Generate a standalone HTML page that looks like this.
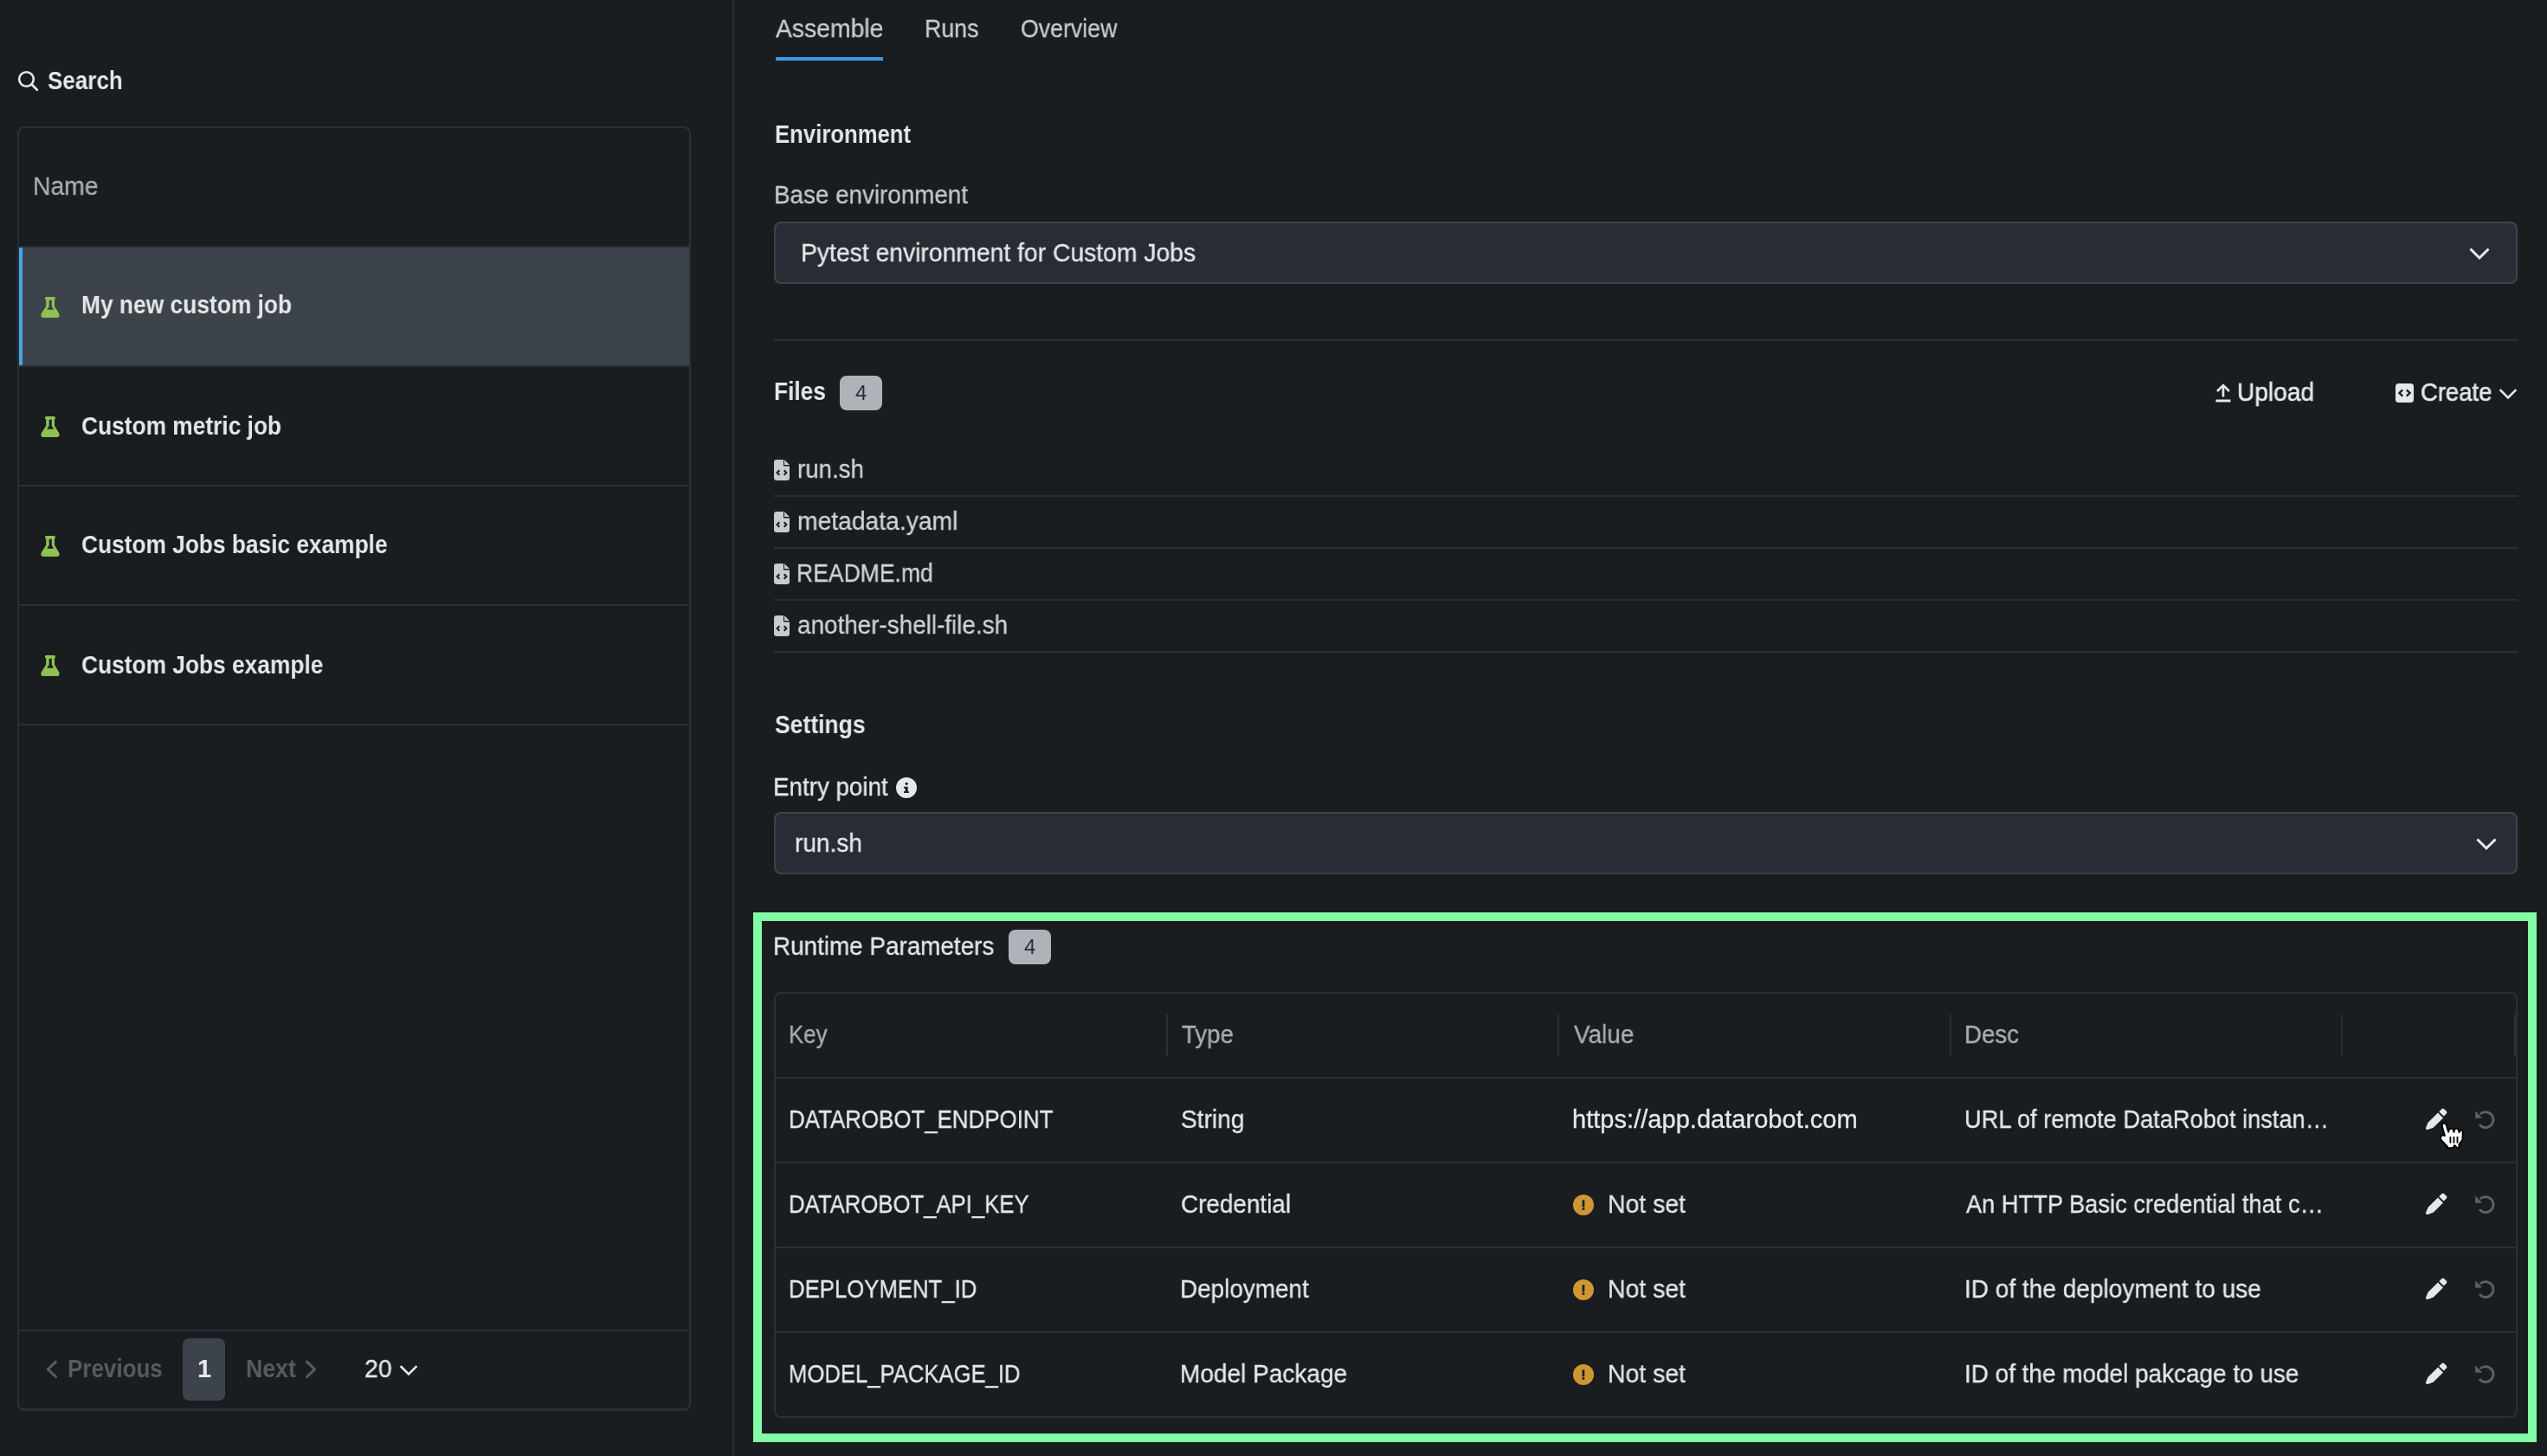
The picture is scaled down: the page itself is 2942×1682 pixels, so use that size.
<!DOCTYPE html>
<html><head><meta charset="utf-8"><style>
html,body{margin:0;padding:0;width:2942px;height:1682px;overflow:hidden;background:#191d20;}
body{position:relative;font-family:"Liberation Sans", sans-serif;}
.t{position:absolute;white-space:nowrap;font-family:"Liberation Sans", sans-serif;transform-origin:0 0;will-change:transform;}
svg{position:absolute;left:0;top:0;}
</style></head><body>
<div style="position:absolute;left:846px;top:0px;width:2px;height:1682px;background:#2b2f36;"></div><div style="position:absolute;left:20px;top:146px;width:774px;height:1479px;border:2px solid #2b2f36;border-bottom-width:3px;border-radius:8px"></div><div style="position:absolute;left:22px;top:284px;width:774px;height:2px;background:#2b2f36;"></div><div style="position:absolute;left:22px;top:286px;width:774px;height:136px;background:#3d434b;"></div><div style="position:absolute;left:22px;top:286px;width:4px;height:136px;background:#46a3e8;"></div><div style="position:absolute;left:22px;top:422px;width:774px;height:2px;background:#2b2f36;"></div><div style="position:absolute;left:22px;top:560px;width:774px;height:2px;background:#2b2f36;"></div><div style="position:absolute;left:22px;top:698px;width:774px;height:2px;background:#2b2f36;"></div><div style="position:absolute;left:22px;top:836px;width:774px;height:2px;background:#2b2f36;"></div><div style="position:absolute;left:22px;top:1536px;width:774px;height:2px;background:#2b2f36;"></div><div style="position:absolute;left:211px;top:1546px;width:49px;height:72px;background:#3d434b;border-radius:7px"></div><div style="position:absolute;left:896px;top:66px;width:124px;height:4px;background:#3d9be6;"></div><div style="position:absolute;left:894px;top:256px;width:2010px;height:68px;background:#282d35;border:2px solid #3e434b;border-radius:8px"></div><div style="position:absolute;left:894px;top:938px;width:2010px;height:68px;background:#282d35;border:2px solid #3e434b;border-radius:8px"></div><div style="position:absolute;left:894px;top:392px;width:2014px;height:2px;background:#2b2f36;"></div><div style="position:absolute;left:970px;top:434px;width:49px;height:40px;background:#aeb3ba;border-radius:8px"></div><div style="position:absolute;left:1165px;top:1074px;width:49px;height:40px;background:#aeb3ba;border-radius:8px"></div><div style="position:absolute;left:894px;top:572px;width:2014px;height:2px;background:#2b2f36;"></div><div style="position:absolute;left:894px;top:632px;width:2014px;height:2px;background:#2b2f36;"></div><div style="position:absolute;left:894px;top:692px;width:2014px;height:2px;background:#2b2f36;"></div><div style="position:absolute;left:894px;top:752px;width:2014px;height:2px;background:#2b2f36;"></div><div style="position:absolute;left:870px;top:1054px;width:2040px;height:592px;border:10px solid #82fba5"></div><div style="position:absolute;left:894px;top:1146px;width:2010px;height:488px;border:2px solid #2b2f36;border-radius:8px"></div><div style="position:absolute;left:896px;top:1244px;width:2010px;height:2px;background:#2b2f36;"></div><div style="position:absolute;left:896px;top:1342px;width:2010px;height:2px;background:#2b2f36;"></div><div style="position:absolute;left:896px;top:1440px;width:2010px;height:2px;background:#2b2f36;"></div><div style="position:absolute;left:896px;top:1538px;width:2010px;height:2px;background:#2b2f36;"></div><div style="position:absolute;left:1347px;top:1172px;width:2px;height:48px;background:#2b2f36;"></div><div style="position:absolute;left:1799px;top:1172px;width:2px;height:48px;background:#2b2f36;"></div><div style="position:absolute;left:2252px;top:1172px;width:2px;height:48px;background:#2b2f36;"></div><div style="position:absolute;left:2704px;top:1172px;width:2px;height:48px;background:#2b2f36;"></div><div style="position:absolute;left:2904px;top:1172px;width:2px;height:48px;background:#2b2f36;"></div>
<svg width="2942" height="1682" viewBox="0 0 2942 1682"><circle cx="30.5" cy="91.5" r="8.3" fill="none" stroke="#e6e7e8" stroke-width="2.6"/><line x1="36.8" y1="97.8" x2="42.8" y2="103.8" stroke="#e6e7e8" stroke-width="2.8" stroke-linecap="round"/><g transform="translate(47,343)" fill="#8fc052"><rect x="4.9" y="0" width="12.1" height="3.4" rx="1.7"/><path fill-rule="evenodd" d="M6.2,3 L16,3 L16,10.8 L21.3,19.5 Q22.6,24 18.5,24 L3.5,24 Q-0.6,24 0.7,19.5 L6.2,10.8 Z M9.7,3.4 L12.8,3.4 L12.8,11 L15,14.7 L7.2,14.7 L9.7,11 Z"/></g><g transform="translate(47,481)" fill="#8fc052"><rect x="4.9" y="0" width="12.1" height="3.4" rx="1.7"/><path fill-rule="evenodd" d="M6.2,3 L16,3 L16,10.8 L21.3,19.5 Q22.6,24 18.5,24 L3.5,24 Q-0.6,24 0.7,19.5 L6.2,10.8 Z M9.7,3.4 L12.8,3.4 L12.8,11 L15,14.7 L7.2,14.7 L9.7,11 Z"/></g><g transform="translate(47,619)" fill="#8fc052"><rect x="4.9" y="0" width="12.1" height="3.4" rx="1.7"/><path fill-rule="evenodd" d="M6.2,3 L16,3 L16,10.8 L21.3,19.5 Q22.6,24 18.5,24 L3.5,24 Q-0.6,24 0.7,19.5 L6.2,10.8 Z M9.7,3.4 L12.8,3.4 L12.8,11 L15,14.7 L7.2,14.7 L9.7,11 Z"/></g><g transform="translate(47,757)" fill="#8fc052"><rect x="4.9" y="0" width="12.1" height="3.4" rx="1.7"/><path fill-rule="evenodd" d="M6.2,3 L16,3 L16,10.8 L21.3,19.5 Q22.6,24 18.5,24 L3.5,24 Q-0.6,24 0.7,19.5 L6.2,10.8 Z M9.7,3.4 L12.8,3.4 L12.8,11 L15,14.7 L7.2,14.7 L9.7,11 Z"/></g><polyline points="2854.5,288.5 2864.0,298 2873.5,288.5" fill="none" stroke="#e6e7e8" stroke-width="3" stroke-linecap="square"/><polyline points="2862.5,970.5 2872.0,980 2881.5,970.5" fill="none" stroke="#e6e7e8" stroke-width="3" stroke-linecap="square"/><polyline points="2888.5,451 2897.0,459.5 2905.5,451" fill="none" stroke="#e6e7e8" stroke-width="2.6" stroke-linecap="square"/><polyline points="463.5,1579 472.0,1587.5 480.5,1579" fill="none" stroke="#e6e7e8" stroke-width="2.6" stroke-linecap="square"/><polyline points="64.5,1573.2 55.3,1581.8 64.5,1590.4" fill="none" stroke="#575c61" stroke-width="3" stroke-linecap="round" stroke-linejoin="round"/><polyline points="354.5,1573.2 363.7,1581.8 354.5,1590.4" fill="none" stroke="#575c61" stroke-width="3" stroke-linecap="round" stroke-linejoin="round"/><g fill="none" stroke="#e6e7e8" stroke-width="2.6"><line x1="2568" y1="445.5" x2="2568" y2="458.5"/><polyline points="2561,452 2568,445 2575,452"/><line x1="2559.5" y1="463" x2="2576.5" y2="463" stroke-width="3"/></g><rect x="2767" y="443" width="21" height="22" rx="3.5" fill="#e6e7e8"/><g fill="none" stroke="#1c2025" stroke-width="2.4"><polyline points="2775.3,450.3 2771.5,454 2775.3,457.7"/><polyline points="2779.8,450.3 2783.6,454 2779.8,457.7"/></g><g transform="translate(894,531)"><path fill="#c8cbcc" d="M0,3 Q0,0 3,0 L11,0 L11,7.5 L18,7.5 L18,21 Q18,24 15,24 L3,24 Q0,24 0,21 Z M12,0 L18,6 L12,6 Z"/><g fill="none" stroke="#191d21" stroke-width="2"><polyline points="6.3,12.2 3.6,15 6.3,17.8"/><polyline points="11.7,12.2 14.4,15 11.7,17.8"/></g></g><g transform="translate(894,591)"><path fill="#c8cbcc" d="M0,3 Q0,0 3,0 L11,0 L11,7.5 L18,7.5 L18,21 Q18,24 15,24 L3,24 Q0,24 0,21 Z M12,0 L18,6 L12,6 Z"/><g fill="none" stroke="#191d21" stroke-width="2"><polyline points="6.3,12.2 3.6,15 6.3,17.8"/><polyline points="11.7,12.2 14.4,15 11.7,17.8"/></g></g><g transform="translate(894,651)"><path fill="#c8cbcc" d="M0,3 Q0,0 3,0 L11,0 L11,7.5 L18,7.5 L18,21 Q18,24 15,24 L3,24 Q0,24 0,21 Z M12,0 L18,6 L12,6 Z"/><g fill="none" stroke="#191d21" stroke-width="2"><polyline points="6.3,12.2 3.6,15 6.3,17.8"/><polyline points="11.7,12.2 14.4,15 11.7,17.8"/></g></g><g transform="translate(894,711)"><path fill="#c8cbcc" d="M0,3 Q0,0 3,0 L11,0 L11,7.5 L18,7.5 L18,21 Q18,24 15,24 L3,24 Q0,24 0,21 Z M12,0 L18,6 L12,6 Z"/><g fill="none" stroke="#191d21" stroke-width="2"><polyline points="6.3,12.2 3.6,15 6.3,17.8"/><polyline points="11.7,12.2 14.4,15 11.7,17.8"/></g></g><circle cx="1047" cy="910" r="12" fill="#e6e7e8"/><circle cx="1047.2" cy="905.3" r="1.6" fill="#191d21"/><path fill="#191d21" d="M1044,908.8 L1048.6,908.8 L1048.6,914.2 L1049.9,914.2 L1049.9,916 L1044,916 L1044,914.2 L1045.5,914.2 L1045.5,910.4 L1044,910.4 Z"/><circle cx="1829" cy="1392" r="12" fill="#cf9733"/><rect x="1827.6" y="1386.3" width="2.7" height="8" fill="#191d21"/><rect x="1827.6" y="1395.2" width="2.7" height="2.6" fill="#191d21"/><circle cx="1829" cy="1490" r="12" fill="#cf9733"/><rect x="1827.6" y="1484.3" width="2.7" height="8" fill="#191d21"/><rect x="1827.6" y="1493.2" width="2.7" height="2.6" fill="#191d21"/><circle cx="1829" cy="1588" r="12" fill="#cf9733"/><rect x="1827.6" y="1582.3" width="2.7" height="8" fill="#191d21"/><rect x="1827.6" y="1591.2" width="2.7" height="2.6" fill="#191d21"/><g transform="translate(0,0)" fill="#e6e7e8"><path d="M2802.3,1304.6 Q2801.6,1303.9 2802.2,1302.6 L2804.6,1296.8 L2816,1285.5 L2822,1291.4 L2810.6,1302.8 L2804.3,1305 Q2803,1305.3 2802.3,1304.6 Z"/><path d="M2817.3,1284.2 L2820.3,1281.2 Q2821.8,1279.9 2823.3,1281.2 L2825.9,1283.8 Q2827.1,1285.3 2825.8,1286.6 L2822.8,1289.6 Z"/></g><g transform="translate(0,0)"><path d="M2864.8,1287 A9,9 0 1 1 2864,1299.2" fill="none" stroke="#5d6266" stroke-width="2.8"/><path d="M2859.2,1283.6 L2859.2,1291.8 L2867.2,1291.6 Z" fill="#5d6266"/></g><g transform="translate(0,98)" fill="#e6e7e8"><path d="M2802.3,1304.6 Q2801.6,1303.9 2802.2,1302.6 L2804.6,1296.8 L2816,1285.5 L2822,1291.4 L2810.6,1302.8 L2804.3,1305 Q2803,1305.3 2802.3,1304.6 Z"/><path d="M2817.3,1284.2 L2820.3,1281.2 Q2821.8,1279.9 2823.3,1281.2 L2825.9,1283.8 Q2827.1,1285.3 2825.8,1286.6 L2822.8,1289.6 Z"/></g><g transform="translate(0,98)"><path d="M2864.8,1287 A9,9 0 1 1 2864,1299.2" fill="none" stroke="#5d6266" stroke-width="2.8"/><path d="M2859.2,1283.6 L2859.2,1291.8 L2867.2,1291.6 Z" fill="#5d6266"/></g><g transform="translate(0,196)" fill="#e6e7e8"><path d="M2802.3,1304.6 Q2801.6,1303.9 2802.2,1302.6 L2804.6,1296.8 L2816,1285.5 L2822,1291.4 L2810.6,1302.8 L2804.3,1305 Q2803,1305.3 2802.3,1304.6 Z"/><path d="M2817.3,1284.2 L2820.3,1281.2 Q2821.8,1279.9 2823.3,1281.2 L2825.9,1283.8 Q2827.1,1285.3 2825.8,1286.6 L2822.8,1289.6 Z"/></g><g transform="translate(0,196)"><path d="M2864.8,1287 A9,9 0 1 1 2864,1299.2" fill="none" stroke="#5d6266" stroke-width="2.8"/><path d="M2859.2,1283.6 L2859.2,1291.8 L2867.2,1291.6 Z" fill="#5d6266"/></g><g transform="translate(0,294)" fill="#e6e7e8"><path d="M2802.3,1304.6 Q2801.6,1303.9 2802.2,1302.6 L2804.6,1296.8 L2816,1285.5 L2822,1291.4 L2810.6,1302.8 L2804.3,1305 Q2803,1305.3 2802.3,1304.6 Z"/><path d="M2817.3,1284.2 L2820.3,1281.2 Q2821.8,1279.9 2823.3,1281.2 L2825.9,1283.8 Q2827.1,1285.3 2825.8,1286.6 L2822.8,1289.6 Z"/></g><g transform="translate(0,294)"><path d="M2864.8,1287 A9,9 0 1 1 2864,1299.2" fill="none" stroke="#5d6266" stroke-width="2.8"/><path d="M2859.2,1283.6 L2859.2,1291.8 L2867.2,1291.6 Z" fill="#5d6266"/></g><path d="M2823,1297.6 Q2825.3,1297.4 2826,1300.2 L2828.2,1307.6 L2828.6,1305.4 Q2831.2,1301.8 2833.8,1305.2 L2834.5,1307.8 L2834.9,1305.2 Q2837.3,1301.8 2839.7,1305 L2840.5,1308 Q2843.3,1303.8 2844.8,1307 L2844.5,1316.7 L2840.4,1322.4 L2840.4,1326.2 L2838.1,1326.2 L2835.4,1323.2 L2833.2,1326.2 L2826.8,1326.2 L2826.8,1324.4 L2819.4,1316.8 Q2818.2,1313.3 2820.5,1311.6 Q2822.2,1310.8 2823.9,1312 L2820.6,1300.4 Q2820.8,1297.8 2823,1297.6 Z" fill="#fafafa" stroke="#000" stroke-width="2" stroke-linejoin="round"/><g stroke="#000" stroke-width="1.8"><line x1="2830.4" y1="1313" x2="2830.4" y2="1320.6"/><line x1="2834.5" y1="1313" x2="2834.5" y2="1320.6"/><line x1="2838.5" y1="1313" x2="2838.5" y2="1320.6"/></g></svg>
<div class="t" style="left:54.90px;top:78.60px;font-size:29px;line-height:29px;font-weight:700;color:#e6e7e8;letter-spacing:0.000px;transform:scaleX(0.8967);">Search</div><div class="t" style="left:37.55px;top:200.50px;font-size:29px;line-height:29px;font-weight:400;color:#a9aeb6;letter-spacing:0.000px;transform:scaleX(0.9767);-webkit-text-stroke:0.3px #a9aeb6;">Name</div><div class="t" style="left:94.09px;top:338.30px;font-size:29px;line-height:29px;font-weight:700;color:#e6e7e8;letter-spacing:0.000px;transform:scaleX(0.9087);">My new custom job</div><div class="t" style="left:94.09px;top:477.50px;font-size:29px;line-height:29px;font-weight:700;color:#e6e7e8;letter-spacing:0.000px;transform:scaleX(0.9076);">Custom metric job</div><div class="t" style="left:94.09px;top:615.00px;font-size:29px;line-height:29px;font-weight:700;color:#e6e7e8;letter-spacing:0.000px;transform:scaleX(0.9064);">Custom Jobs basic example</div><div class="t" style="left:94.09px;top:753.50px;font-size:29px;line-height:29px;font-weight:700;color:#e6e7e8;letter-spacing:0.000px;transform:scaleX(0.9074);">Custom Jobs example</div><div class="t" style="left:77.70px;top:1566.70px;font-size:29px;line-height:29px;font-weight:700;color:#575c61;letter-spacing:0.000px;transform:scaleX(0.8956);">Previous</div><div class="t" style="left:228.40px;top:1566.70px;font-size:29px;line-height:29px;font-weight:700;color:#e6e7e8;letter-spacing:0.000px;">1</div><div class="t" style="left:283.88px;top:1566.70px;font-size:29px;line-height:29px;font-weight:700;color:#575c61;letter-spacing:0.000px;transform:scaleX(0.9196);">Next</div><div class="t" style="left:421.02px;top:1566.70px;font-size:29px;line-height:29px;font-weight:400;color:#e6e7e8;letter-spacing:0.000px;transform:scaleX(0.9791);-webkit-text-stroke:0.3px #e6e7e8;">20</div><div class="t" style="left:896.40px;top:19.20px;font-size:29px;line-height:29px;font-weight:400;color:#c9cbcd;letter-spacing:0.000px;transform:scaleX(0.9762);-webkit-text-stroke:0.3px #c9cbcd;">Assemble</div><div class="t" style="left:1067.66px;top:19.20px;font-size:29px;line-height:29px;font-weight:400;color:#c9cbcd;letter-spacing:0.000px;transform:scaleX(0.9218);-webkit-text-stroke:0.3px #c9cbcd;">Runs</div><div class="t" style="left:1178.78px;top:19.20px;font-size:29px;line-height:29px;font-weight:400;color:#c9cbcd;letter-spacing:0.000px;transform:scaleX(0.9213);-webkit-text-stroke:0.3px #c9cbcd;">Overview</div><div class="t" style="left:894.71px;top:140.50px;font-size:29px;line-height:29px;font-weight:700;color:#e6e7e8;letter-spacing:0.000px;transform:scaleX(0.8863);">Environment</div><div class="t" style="left:893.58px;top:211.20px;font-size:29px;line-height:29px;font-weight:400;color:#c5c8cc;letter-spacing:0.000px;transform:scaleX(0.9582);-webkit-text-stroke:0.3px #c5c8cc;">Base environment</div><div class="t" style="left:925.45px;top:277.90px;font-size:29px;line-height:29px;font-weight:400;color:#e6e7e8;letter-spacing:0.000px;transform:scaleX(0.9757);-webkit-text-stroke:0.3px #e6e7e8;">Pytest environment for Custom Jobs</div><div class="t" style="left:893.79px;top:438.10px;font-size:29px;line-height:29px;font-weight:700;color:#e6e7e8;letter-spacing:0.000px;transform:scaleX(0.9053);">Files</div><div class="t" style="left:988.00px;top:441.50px;font-size:24px;line-height:24px;font-weight:400;color:#2a2f36;letter-spacing:0.000px;">4</div><div class="t" style="left:2584.36px;top:438.50px;font-size:29px;line-height:29px;font-weight:400;color:#e6e7e8;letter-spacing:0.000px;transform:scaleX(0.9699);-webkit-text-stroke:0.6px #e6e7e8;">Upload</div><div class="t" style="left:2796.45px;top:438.50px;font-size:29px;line-height:29px;font-weight:400;color:#e6e7e8;letter-spacing:0.000px;transform:scaleX(0.9468);-webkit-text-stroke:0.6px #e6e7e8;">Create</div><div class="t" style="left:920.75px;top:527.50px;font-size:29px;line-height:29px;font-weight:400;color:#d0d2d4;letter-spacing:0.000px;transform:scaleX(0.9532);-webkit-text-stroke:0.3px #d0d2d4;">run.sh</div><div class="t" style="left:920.73px;top:587.50px;font-size:29px;line-height:29px;font-weight:400;color:#d0d2d4;letter-spacing:0.000px;transform:scaleX(0.9747);-webkit-text-stroke:0.3px #d0d2d4;">metadata.yaml</div><div class="t" style="left:919.87px;top:647.50px;font-size:29px;line-height:29px;font-weight:400;color:#d0d2d4;letter-spacing:0.000px;transform:scaleX(0.9150);-webkit-text-stroke:0.3px #d0d2d4;">README.md</div><div class="t" style="left:920.74px;top:707.50px;font-size:29px;line-height:29px;font-weight:400;color:#d0d2d4;letter-spacing:0.000px;transform:scaleX(0.9604);-webkit-text-stroke:0.3px #d0d2d4;">another-shell-file.sh</div><div class="t" style="left:894.80px;top:823.00px;font-size:29px;line-height:29px;font-weight:700;color:#e6e7e8;letter-spacing:0.000px;transform:scaleX(0.9146);">Settings</div><div class="t" style="left:893.39px;top:894.80px;font-size:29px;line-height:29px;font-weight:400;color:#e6e7e8;letter-spacing:0.000px;transform:scaleX(0.9570);-webkit-text-stroke:0.3px #e6e7e8;">Entry point</div><div class="t" style="left:918.03px;top:959.50px;font-size:29px;line-height:29px;font-weight:400;color:#e6e7e8;letter-spacing:0.000px;transform:scaleX(0.9660);-webkit-text-stroke:0.3px #e6e7e8;">run.sh</div><div class="t" style="left:892.78px;top:1079.20px;font-size:29px;line-height:29px;font-weight:400;color:#e6e7e8;letter-spacing:0.000px;transform:scaleX(0.9600);-webkit-text-stroke:0.3px #e6e7e8;">Runtime Parameters</div><div class="t" style="left:1182.50px;top:1081.50px;font-size:24px;line-height:24px;font-weight:400;color:#2a2f36;letter-spacing:0.000px;">4</div><div class="t" style="left:910.82px;top:1180.50px;font-size:29px;line-height:29px;font-weight:400;color:#a9aeb6;letter-spacing:0.000px;transform:scaleX(0.8913);-webkit-text-stroke:0.3px #a9aeb6;">Key</div><div class="t" style="left:1364.80px;top:1180.50px;font-size:29px;line-height:29px;font-weight:400;color:#a9aeb6;letter-spacing:0.000px;transform:scaleX(0.9540);-webkit-text-stroke:0.3px #a9aeb6;">Type</div><div class="t" style="left:1817.50px;top:1180.50px;font-size:29px;line-height:29px;font-weight:400;color:#a9aeb6;letter-spacing:0.000px;transform:scaleX(0.9635);-webkit-text-stroke:0.3px #a9aeb6;">Value</div><div class="t" style="left:2268.59px;top:1180.50px;font-size:29px;line-height:29px;font-weight:400;color:#a9aeb6;letter-spacing:0.000px;transform:scaleX(0.9548);-webkit-text-stroke:0.3px #a9aeb6;">Desc</div><div class="t" style="left:911.01px;top:1278.90px;font-size:29px;line-height:29px;font-weight:400;color:#e6e7e8;letter-spacing:0.000px;transform:scaleX(0.8927);-webkit-text-stroke:0.3px #e6e7e8;">DATAROBOT_ENDPOINT</div><div class="t" style="left:1364.33px;top:1278.90px;font-size:29px;line-height:29px;font-weight:400;color:#e6e7e8;letter-spacing:0.000px;transform:scaleX(0.9684);-webkit-text-stroke:0.3px #e6e7e8;">String</div><div class="t" style="left:1815.50px;top:1278.90px;font-size:29px;line-height:29px;font-weight:400;color:#e6e7e8;letter-spacing:0.033px;-webkit-text-stroke:0.3px #e6e7e8;">https://app.datarobot.com</div><div class="t" style="left:2268.62px;top:1278.90px;font-size:29px;line-height:29px;font-weight:400;color:#e6e7e8;letter-spacing:0.000px;transform:scaleX(0.9381);-webkit-text-stroke:0.3px #e6e7e8;">URL of remote DataRobot instan…</div><div class="t" style="left:911.03px;top:1376.90px;font-size:29px;line-height:29px;font-weight:400;color:#e6e7e8;letter-spacing:0.000px;transform:scaleX(0.8863);-webkit-text-stroke:0.3px #e6e7e8;">DATAROBOT_API_KEY</div><div class="t" style="left:1364.34px;top:1376.90px;font-size:29px;line-height:29px;font-weight:400;color:#e6e7e8;letter-spacing:0.000px;transform:scaleX(0.9611);-webkit-text-stroke:0.3px #e6e7e8;">Credential</div><div class="t" style="left:1856.74px;top:1376.90px;font-size:29px;line-height:29px;font-weight:400;color:#e6e7e8;letter-spacing:0.000px;transform:scaleX(0.9798);-webkit-text-stroke:0.3px #e6e7e8;">Not set</div><div class="t" style="left:2270.50px;top:1376.90px;font-size:29px;line-height:29px;font-weight:400;color:#e6e7e8;letter-spacing:0.000px;transform:scaleX(0.9394);-webkit-text-stroke:0.3px #e6e7e8;">An HTTP Basic credential that c…</div><div class="t" style="left:911.03px;top:1474.90px;font-size:29px;line-height:29px;font-weight:400;color:#e6e7e8;letter-spacing:0.000px;transform:scaleX(0.8872);-webkit-text-stroke:0.3px #e6e7e8;">DEPLOYMENT_ID</div><div class="t" style="left:1363.38px;top:1474.90px;font-size:29px;line-height:29px;font-weight:400;color:#e6e7e8;letter-spacing:0.000px;transform:scaleX(0.9608);-webkit-text-stroke:0.3px #e6e7e8;">Deployment</div><div class="t" style="left:1856.74px;top:1474.90px;font-size:29px;line-height:29px;font-weight:400;color:#e6e7e8;letter-spacing:0.000px;transform:scaleX(0.9798);-webkit-text-stroke:0.3px #e6e7e8;">Not set</div><div class="t" style="left:2268.57px;top:1474.90px;font-size:29px;line-height:29px;font-weight:400;color:#e6e7e8;letter-spacing:0.000px;transform:scaleX(0.9666);-webkit-text-stroke:0.3px #e6e7e8;">ID of the deployment to use</div><div class="t" style="left:911.03px;top:1572.90px;font-size:29px;line-height:29px;font-weight:400;color:#e6e7e8;letter-spacing:0.000px;transform:scaleX(0.8845);-webkit-text-stroke:0.3px #e6e7e8;">MODEL_PACKAGE_ID</div><div class="t" style="left:1363.37px;top:1572.90px;font-size:29px;line-height:29px;font-weight:400;color:#e6e7e8;letter-spacing:0.000px;transform:scaleX(0.9661);-webkit-text-stroke:0.3px #e6e7e8;">Model Package</div><div class="t" style="left:1856.74px;top:1572.90px;font-size:29px;line-height:29px;font-weight:400;color:#e6e7e8;letter-spacing:0.000px;transform:scaleX(0.9798);-webkit-text-stroke:0.3px #e6e7e8;">Not set</div><div class="t" style="left:2268.57px;top:1572.90px;font-size:29px;line-height:29px;font-weight:400;color:#e6e7e8;letter-spacing:0.000px;transform:scaleX(0.9626);-webkit-text-stroke:0.3px #e6e7e8;">ID of the model pakcage to use</div>
</body></html>
